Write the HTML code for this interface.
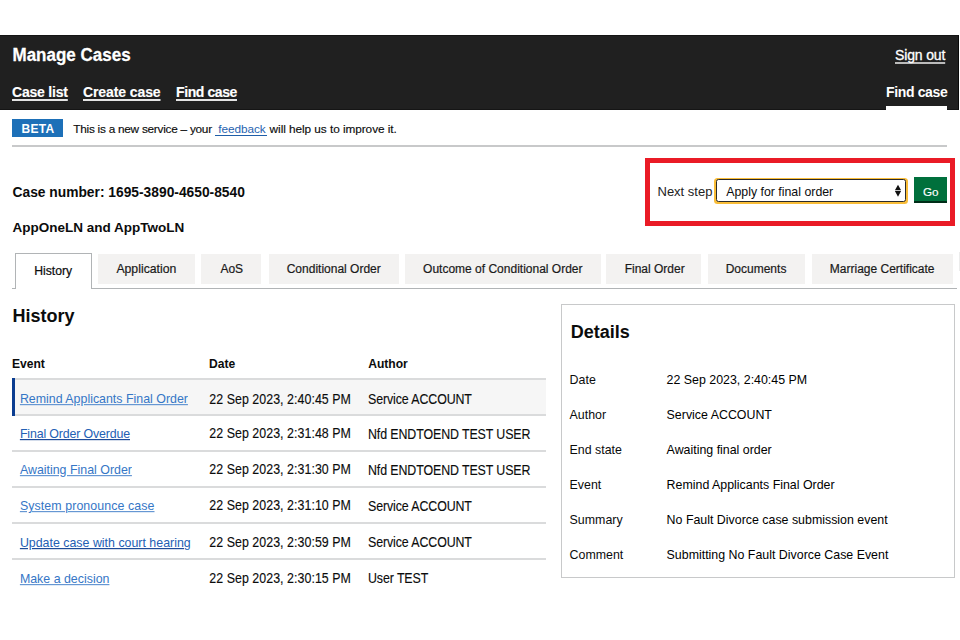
<!DOCTYPE html>
<html><head><meta charset="utf-8"><title>Manage Cases</title>
<style>
html,body{margin:0;padding:0;background:#fff;width:960px;height:640px;overflow:hidden;position:relative}
.t{position:absolute;font-family:"Liberation Sans",sans-serif;white-space:nowrap;line-height:normal}
.r{position:absolute;box-sizing:border-box}
</style></head><body>
<div class="r" style="left:0px;top:35px;width:959px;height:75px;background:#202020;border-top:1px solid #141414;border-bottom:1px solid #151515;border-right:1px solid #0a0a0a"></div>
<div class="t " style="left:12.5px;top:45.52px;font-size:17px;font-weight:700;color:#fff;transform:scaleY(1.05);transform-origin:0 15.38px;-webkit-text-stroke:0.25px #fff">Manage Cases</div>
<div class="t " style="left:12px;top:84.43px;font-size:14px;font-weight:700;color:#fff;text-decoration:underline;text-decoration-color:#e4e4e4;text-decoration-skip-ink:none;text-decoration-thickness:1.8px;text-underline-offset:2px;-webkit-text-stroke:0.15px #fff;letter-spacing:-0.2px">Case list</div>
<div class="t " style="left:83px;top:84.43px;font-size:14px;font-weight:700;color:#fff;text-decoration:underline;text-decoration-color:#e4e4e4;text-decoration-skip-ink:none;text-decoration-thickness:1.8px;text-underline-offset:2px;-webkit-text-stroke:0.15px #fff;letter-spacing:-0.1px">Create case</div>
<div class="t " style="left:176px;top:84.43px;font-size:14px;font-weight:700;color:#fff;text-decoration:underline;text-decoration-color:#e4e4e4;text-decoration-skip-ink:none;text-decoration-thickness:1.8px;text-underline-offset:2px;-webkit-text-stroke:0.15px #fff;letter-spacing:-0.4px">Find case</div>
<div class="t " style="left:895px;top:47.13px;font-size:14px;font-weight:400;color:#fff;text-decoration:underline;text-decoration-color:#bbb;text-decoration-skip-ink:none;text-decoration-thickness:1.5px;text-underline-offset:2px;-webkit-text-stroke:0.3px #fff;letter-spacing:-0.15px">Sign out</div>
<div class="t " style="left:886px;top:83.93px;font-size:14px;font-weight:700;color:#fff;letter-spacing:-0.35px">Find case</div>
<div class="r" style="left:886px;top:106px;width:61px;height:4px;background:#fff"></div>
<div class="r" style="left:12px;top:118.7px;width:51.4px;height:18.8px;background:#1d70b8"></div>
<div class="t " style="left:21.5px;top:121.64px;font-size:12px;font-weight:700;color:#fff;letter-spacing:0.3px">BETA</div>
<div class="t " style="left:73.3px;top:121.82px;font-size:11.8px;font-weight:400;color:#0b0c0c;letter-spacing:-0.25px;-webkit-text-stroke:0.15px #0b0c0c">This is a new service – your</div>
<div class="t " style="left:218.2px;top:121.82px;font-size:11.8px;font-weight:400;color:#1f62b0;letter-spacing:-0.05px">feedback</div>
<div class="r" style="left:215px;top:134.6px;width:52px;height:1.2px;background:#1f5ea8"></div>
<div class="t " style="left:269.6px;top:121.82px;font-size:11.8px;font-weight:400;color:#0b0c0c;letter-spacing:-0.05px;-webkit-text-stroke:0.15px #0b0c0c">will help us to improve it.</div>
<div class="r" style="left:12px;top:145px;width:935px;height:2px;background:#c8c9ca"></div>
<div class="t " style="left:12.5px;top:185.11px;font-size:13.8px;font-weight:700;color:#0b0c0c;">Case number: 1695-3890-4650-8540</div>
<div class="t " style="left:12.5px;top:220.08px;font-size:13.5px;font-weight:700;color:#0b0c0c;">AppOneLN and AppTwoLN</div>
<div class="r" style="left:645px;top:158px;width:310px;height:68px;border:5px solid #ea1b26"></div>
<div class="t " style="left:657.5px;top:184.44px;font-size:13px;font-weight:400;color:#222;">Next step</div>
<div class="r" style="left:713.8px;top:177.6px;width:193.8px;height:26.2px;background:#f9bd38;border-radius:3.5px"></div>
<div class="r" style="left:715.5px;top:179.2px;width:190.3px;height:22.8px;background:#fff;border:1.7px solid #2b2b2b;box-sizing:border-box;border-radius:2.5px"></div>
<div class="t " style="left:726.2px;top:184.72px;font-size:12.35px;font-weight:400;color:#0b0c0c;">Apply for final order</div>
<svg class="r" style="left:894px;top:184px" width="8" height="14" viewBox="0 0 8 14"><path d="M4 0.8 L7.1 6.3 H0.9 Z M4 12.8 L7.1 7.1 H0.9 Z" fill="#111"/></svg>
<div class="r" style="left:914px;top:177px;width:33px;height:24px;background:#00703c;box-shadow:0 2px 0 #002d18"></div>
<div class="t " style="left:923px;top:185.01px;font-size:11.7px;font-weight:400;color:#fff;-webkit-text-stroke:0.15px #fff">Go</div>
<div class="r" style="left:12px;top:287.7px;width:944.5px;height:1.2px;background:#b1b4b6"></div>
<div class="r" style="left:15px;top:252.8px;width:77px;height:36.2px;background:#fff;border:1px solid #b1b4b6;border-right-width:1.5px;border-bottom:none;box-sizing:border-box"></div>
<div class="t " style="left:34.2px;top:264.36px;font-size:12.2px;font-weight:400;color:#0b0c0c;-webkit-text-stroke:0.2px #0b0c0c">History</div>
<div class="r" style="left:97.5px;top:254px;width:97.0px;height:29.5px;background:#f3f2f1"></div>
<div class="t " style="left:116.4px;top:261.91px;font-size:12.25px;font-weight:400;color:#1a1a1a;-webkit-text-stroke:0.2px #1a1a1a">Application</div>
<div class="r" style="left:200.8px;top:254px;width:60.2px;height:29.5px;background:#f3f2f1"></div>
<div class="t " style="left:220.39999999999998px;top:261.64px;font-size:12px;font-weight:400;color:#1a1a1a;-webkit-text-stroke:0.2px #1a1a1a">AoS</div>
<div class="r" style="left:269px;top:254px;width:130px;height:29.5px;background:#f3f2f1"></div>
<div class="t " style="left:286.7px;top:261.64px;font-size:12px;font-weight:400;color:#1a1a1a;-webkit-text-stroke:0.2px #1a1a1a">Conditional Order</div>
<div class="r" style="left:404.7px;top:254px;width:195.9px;height:29.5px;background:#f3f2f1"></div>
<div class="t " style="left:423.09999999999997px;top:261.64px;font-size:12px;font-weight:400;color:#1a1a1a;-webkit-text-stroke:0.2px #1a1a1a">Outcome of Conditional Order</div>
<div class="r" style="left:606.2px;top:254px;width:95.1px;height:29.5px;background:#f3f2f1"></div>
<div class="t " style="left:624.7px;top:261.64px;font-size:12px;font-weight:400;color:#1a1a1a;-webkit-text-stroke:0.2px #1a1a1a">Final Order</div>
<div class="r" style="left:707.7px;top:254px;width:97.7px;height:29.5px;background:#f3f2f1"></div>
<div class="t " style="left:725.7px;top:261.64px;font-size:12px;font-weight:400;color:#1a1a1a;-webkit-text-stroke:0.2px #1a1a1a">Documents</div>
<div class="r" style="left:811.8px;top:254px;width:141.7px;height:29.5px;background:#f3f2f1"></div>
<div class="t " style="left:829.8000000000001px;top:261.64px;font-size:12px;font-weight:400;color:#1a1a1a;-webkit-text-stroke:0.2px #1a1a1a">Marriage Certificate</div>
<div class="r" style="left:959px;top:252px;width:1px;height:19px;background:#ececec"></div>
<div class="t " style="left:12.5px;top:305.61px;font-size:18px;font-weight:700;color:#0b0c0c;">History</div>
<div class="t " style="left:11.9px;top:357.25px;font-size:12.1px;font-weight:700;color:#0b0c0c;">Event</div>
<div class="t " style="left:209.1px;top:356.95px;font-size:12.1px;font-weight:700;color:#0b0c0c;">Date</div>
<div class="t " style="left:368.2px;top:356.95px;font-size:12.1px;font-weight:700;color:#0b0c0c;">Author</div>
<div class="r" style="left:12px;top:380px;width:534px;height:34px;background:#f6f6f6"></div>
<div class="r" style="left:12px;top:378px;width:534px;height:1.8px;background:#dadbdc"></div>
<div class="r" style="left:12px;top:414px;width:534px;height:1.8px;background:#dadbdc"></div>
<div class="r" style="left:12px;top:450.3px;width:534px;height:1.8px;background:#dadbdc"></div>
<div class="r" style="left:12px;top:486px;width:534px;height:1.8px;background:#dadbdc"></div>
<div class="r" style="left:12px;top:522.1px;width:534px;height:1.8px;background:#dadbdc"></div>
<div class="r" style="left:12px;top:557.8px;width:534px;height:1.8px;background:#dadbdc"></div>
<div class="r" style="left:12px;top:378px;width:3px;height:37.5px;background:#0b3d91"></div>
<div class="t " style="left:19.9px;top:391.98px;font-size:12.4px;font-weight:400;color:#3576c6;transform:scaleY(1.1);transform-origin:0 11.22px;text-decoration:underline;text-decoration-color:#5a8fd0;text-underline-offset:1px;letter-spacing:0px">Remind Applicants Final Order</div>
<div class="t " style="left:209.3px;top:392.58px;font-size:12.4px;font-weight:400;color:#0b0c0c;transform:scaleY(1.13);transform-origin:0 11.22px;letter-spacing:0.05px;-webkit-text-stroke:0.12px #0b0c0c">22 Sep 2023, 2:40:45 PM</div>
<div class="t " style="left:368px;top:393.18px;font-size:12.4px;font-weight:400;color:#0b0c0c;transform:scaleY(1.13);transform-origin:0 11.22px;letter-spacing:-0.1px;-webkit-text-stroke:0.12px #0b0c0c">Service ACCOUNT</div>
<div class="t " style="left:19.9px;top:426.78px;font-size:12.4px;font-weight:400;color:#2360b4;transform:scaleY(1.1);transform-origin:0 11.22px;text-decoration:underline;text-decoration-color:#0b3d91;text-underline-offset:1px;letter-spacing:-0.15px">Final Order Overdue</div>
<div class="t " style="left:209.3px;top:427.08px;font-size:12.4px;font-weight:400;color:#0b0c0c;transform:scaleY(1.13);transform-origin:0 11.22px;letter-spacing:0.05px;-webkit-text-stroke:0.12px #0b0c0c">22 Sep 2023, 2:31:48 PM</div>
<div class="t " style="left:368px;top:427.68px;font-size:12.4px;font-weight:400;color:#0b0c0c;transform:scaleY(1.13);transform-origin:0 11.22px;letter-spacing:-0.1px;-webkit-text-stroke:0.12px #0b0c0c">Nfd ENDTOEND TEST USER</div>
<div class="t " style="left:19.9px;top:462.78px;font-size:12.4px;font-weight:400;color:#3576c6;transform:scaleY(1.1);transform-origin:0 11.22px;text-decoration:underline;text-decoration-color:#5a8fd0;text-underline-offset:1px;letter-spacing:0px">Awaiting Final Order</div>
<div class="t " style="left:209.3px;top:463.38px;font-size:12.4px;font-weight:400;color:#0b0c0c;transform:scaleY(1.13);transform-origin:0 11.22px;letter-spacing:0.05px;-webkit-text-stroke:0.12px #0b0c0c">22 Sep 2023, 2:31:30 PM</div>
<div class="t " style="left:368px;top:463.98px;font-size:12.4px;font-weight:400;color:#0b0c0c;transform:scaleY(1.13);transform-origin:0 11.22px;letter-spacing:-0.1px;-webkit-text-stroke:0.12px #0b0c0c">Nfd ENDTOEND TEST USER</div>
<div class="t " style="left:19.9px;top:499.08px;font-size:12.4px;font-weight:400;color:#3576c6;transform:scaleY(1.1);transform-origin:0 11.22px;text-decoration:underline;text-decoration-color:#5a8fd0;text-underline-offset:1px;letter-spacing:0.08px">System pronounce case</div>
<div class="t " style="left:209.3px;top:499.38px;font-size:12.4px;font-weight:400;color:#0b0c0c;transform:scaleY(1.13);transform-origin:0 11.22px;letter-spacing:0.05px;-webkit-text-stroke:0.12px #0b0c0c">22 Sep 2023, 2:31:10 PM</div>
<div class="t " style="left:368px;top:499.98px;font-size:12.4px;font-weight:400;color:#0b0c0c;transform:scaleY(1.13);transform-origin:0 11.22px;letter-spacing:-0.1px;-webkit-text-stroke:0.12px #0b0c0c">Service ACCOUNT</div>
<div class="t " style="left:19.9px;top:535.58px;font-size:12.4px;font-weight:400;color:#2360b4;transform:scaleY(1.1);transform-origin:0 11.22px;text-decoration:underline;text-decoration-color:#0b3d91;text-underline-offset:1px;letter-spacing:0px">Update case with court hearing</div>
<div class="t " style="left:209.3px;top:535.68px;font-size:12.4px;font-weight:400;color:#0b0c0c;transform:scaleY(1.13);transform-origin:0 11.22px;letter-spacing:0.05px;-webkit-text-stroke:0.12px #0b0c0c">22 Sep 2023, 2:30:59 PM</div>
<div class="t " style="left:368px;top:536.28px;font-size:12.4px;font-weight:400;color:#0b0c0c;transform:scaleY(1.13);transform-origin:0 11.22px;letter-spacing:-0.1px;-webkit-text-stroke:0.12px #0b0c0c">Service ACCOUNT</div>
<div class="t " style="left:19.9px;top:571.68px;font-size:12.4px;font-weight:400;color:#3576c6;transform:scaleY(1.1);transform-origin:0 11.22px;text-decoration:underline;text-decoration-color:#5a8fd0;text-underline-offset:1px;letter-spacing:0px">Make a decision</div>
<div class="t " style="left:209.3px;top:571.78px;font-size:12.4px;font-weight:400;color:#0b0c0c;transform:scaleY(1.13);transform-origin:0 11.22px;letter-spacing:0.05px;-webkit-text-stroke:0.12px #0b0c0c">22 Sep 2023, 2:30:15 PM</div>
<div class="t " style="left:368px;top:572.38px;font-size:12.4px;font-weight:400;color:#0b0c0c;transform:scaleY(1.13);transform-origin:0 11.22px;letter-spacing:-0.1px;-webkit-text-stroke:0.12px #0b0c0c">User TEST</div>
<div class="r" style="left:561px;top:304px;width:394px;height:274px;border:1px solid #c8c9ca;box-sizing:border-box"></div>
<div class="t " style="left:570.8px;top:322.21px;font-size:18px;font-weight:700;color:#0b0c0c;">Details</div>
<div class="t " style="left:569.6px;top:372.78px;font-size:12.4px;font-weight:400;color:#0b0c0c;transform:scaleY(1.1);transform-origin:0 11.22px;">Date</div>
<div class="t " style="left:666.6px;top:372.78px;font-size:12.4px;font-weight:400;color:letter-spacing:-0.03px;transform:scaleY(1.1);transform-origin:0 11.22px;">22 Sep 2023, 2:40:45 PM</div>
<div class="t " style="left:569.6px;top:408.18px;font-size:12.4px;font-weight:400;color:#0b0c0c;transform:scaleY(1.1);transform-origin:0 11.22px;">Author</div>
<div class="t " style="left:666.6px;top:408.18px;font-size:12.4px;font-weight:400;color:letter-spacing:-0.03px;transform:scaleY(1.1);transform-origin:0 11.22px;">Service ACCOUNT</div>
<div class="t " style="left:569.6px;top:442.98px;font-size:12.4px;font-weight:400;color:#0b0c0c;transform:scaleY(1.1);transform-origin:0 11.22px;">End state</div>
<div class="t " style="left:666.6px;top:442.98px;font-size:12.4px;font-weight:400;color:letter-spacing:-0.03px;transform:scaleY(1.1);transform-origin:0 11.22px;">Awaiting final order</div>
<div class="t " style="left:569.6px;top:477.78px;font-size:12.4px;font-weight:400;color:#0b0c0c;transform:scaleY(1.1);transform-origin:0 11.22px;">Event</div>
<div class="t " style="left:666.6px;top:477.78px;font-size:12.4px;font-weight:400;color:letter-spacing:-0.03px;transform:scaleY(1.1);transform-origin:0 11.22px;">Remind Applicants Final Order</div>
<div class="t " style="left:569.6px;top:512.78px;font-size:12.4px;font-weight:400;color:#0b0c0c;transform:scaleY(1.1);transform-origin:0 11.22px;">Summary</div>
<div class="t " style="left:666.6px;top:512.78px;font-size:12.4px;font-weight:400;color:letter-spacing:-0.03px;transform:scaleY(1.1);transform-origin:0 11.22px;">No Fault Divorce case submission event</div>
<div class="t " style="left:569.6px;top:547.98px;font-size:12.4px;font-weight:400;color:#0b0c0c;transform:scaleY(1.1);transform-origin:0 11.22px;">Comment</div>
<div class="t " style="left:666.6px;top:547.98px;font-size:12.4px;font-weight:400;color:letter-spacing:-0.03px;transform:scaleY(1.1);transform-origin:0 11.22px;">Submitting No Fault Divorce Case Event</div>
</body></html>
